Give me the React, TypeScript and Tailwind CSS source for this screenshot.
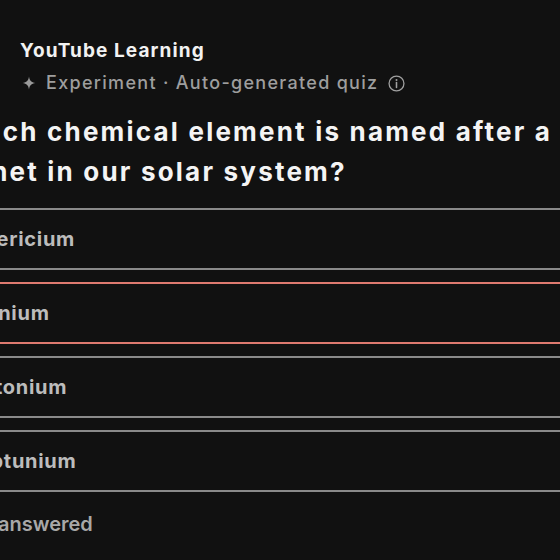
import React from "react";

const Sparkle = () => (
  <svg width="14" height="14" viewBox="0 0 24 24" className="shrink-0">
    <path d="M12 1 C13 8 16 11 23 12 C16 13 13 16 12 23 C11 16 8 13 1 12 C8 11 11 8 12 1 Z" fill="#9a9a9a" />
  </svg>
);

const Info = () => (
  <svg width="17" height="17" viewBox="0 0 24 24" className="shrink-0">
    <circle cx="12" cy="12" r="10.5" fill="none" stroke="#a0a0a0" strokeWidth="1.8" />
    <line x1="12" y1="10.5" x2="12" y2="17.5" stroke="#a0a0a0" strokeWidth="2.2" strokeLinecap="round" />
    <circle cx="12" cy="7" r="1.4" fill="#a0a0a0" />
  </svg>
);

const options = [
  { label: "Americium", red: false },
  { label: "Uranium", red: true },
  { label: "Plutonium", red: false },
  { label: "Neptunium", red: false },
];

export default function App() {
  return (
    <div
      className="w-[560px] h-[560px] overflow-hidden bg-[#111111]"
      style={{ fontFamily: "Inter, 'Noto Sans', sans-serif" }}
    >
      <div className="pt-[38px] pl-[20px]">
        <div className="text-[19px] font-bold text-[#f2f2f2] leading-[26px] tracking-[1.1px]">YouTube Learning</div>
        <div className="mt-[6px] ml-[2px] flex items-center gap-[10px] text-[18px] font-medium text-[#9e9e9e] leading-[26px]">
          <Sparkle />
          <span className="tracking-[1.3px]">Experiment · Auto-generated quiz</span>
          <Info />
        </div>
      </div>
      <div className="ml-[-54px] w-[700px] mt-[16px]">
        <div className="text-[26px] font-bold text-[#f4f4f4] leading-[40px] tracking-[2.2px]">
          Which chemical element is named after a<br />planet in our solar system?
        </div>
        <div className="mt-[16px] flex flex-col gap-[12px] w-[720px]">
          {options.map((o) => (
            <div
              key={o.label}
              className={
                "h-[62px] flex items-center pl-[14px] border-2 rounded-[6px] " +
                (o.red ? "border-[#df7a70]" : "border-[#8a8a8a]")
              }
            >
              <span className="text-[20px] font-bold text-[#bcbcbc] tracking-[0.7px]">{o.label}</span>
            </div>
          ))}
          <div className="h-[40px] flex items-center pl-[25px]">
            <span className="text-[20px] font-semibold text-[#a8a8a8]">Unanswered</span>
          </div>
        </div>
      </div>
    </div>
  );
}
